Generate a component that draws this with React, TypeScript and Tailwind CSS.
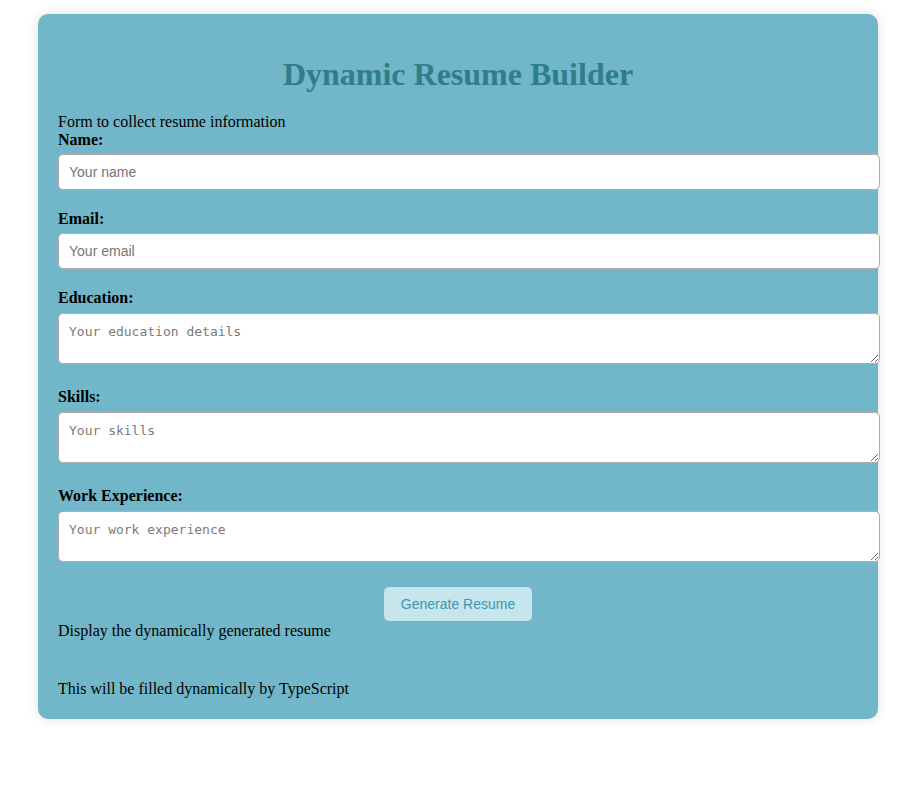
import React from 'react';

const serif = 'font-["Liberation_Serif","Times_New_Roman",serif]';

const Field = ({ label, placeholder, area, top }: { label: string, placeholder: string, area?: boolean, top: string }) => (
    <div className={top}>
        <label className={`block ${serif} text-[16px] leading-[18px] font-bold text-black`}>{label}</label>
        {area ? (
            <textarea
                placeholder={placeholder}
                className="block mt-[6px] w-[822px] h-[51px] px-[10px] py-[10px] bg-white border border-[#b8a9ac] rounded-[5px] font-['DejaVu_Sans_Mono',monospace] text-[13px] leading-[15px] placeholder:text-[#7a7a7a] resize-y"
            />
        ) : (
            <input
                placeholder={placeholder}
                className="block mt-[5px] w-[822px] h-[36px] px-[10px] bg-white border border-[#b8a9ac] rounded-[5px] font-['Liberation_Sans',Arial,sans-serif] text-[14px] placeholder:text-[#757575]"
            />
        )}
    </div>
);

export default function App() {
    return (
        <div className="min-h-[805px] bg-white pt-[14px]">
            <div className="ml-[38px] w-[840px] bg-[#71b7c9] rounded-[10px] shadow-[0_0_12px_rgba(0,0,0,0.12)] px-[20px] pt-[21px] pb-[21px]">
                <h1 className={`${serif} text-[32px] leading-[37px] font-bold text-[#2f7e8a] text-center mt-[21px] mb-[20px]`}>
                    Dynamic Resume Builder
                </h1>

                {/* Form */}
                <p className={`${serif} text-[16px] leading-[18px] text-black`}>Form to collect resume information</p>
                <Field label="Name:" placeholder="Your name" top="" />
                <Field label="Email:" placeholder="Your email" top="mt-[20px]" />
                <Field label="Education:" placeholder="Your education details" area top="mt-[20px]" />
                <Field label="Skills:" placeholder="Your skills" area top="mt-[24px]" />
                <Field label="Work Experience:" placeholder="Your work experience" area top="mt-[24px]" />

                <div className="flex justify-center mt-[25px]">
                    <button className="w-[148px] h-[34px] bg-[#c7e5ec] text-[#4196af] rounded-[5px] font-['Liberation_Sans',Arial,sans-serif] text-[14px]">
                        Generate Resume
                    </button>
                </div>

                {/* Output */}
                <p className={`${serif} text-[16px] leading-[18px] text-black mt-[1px]`}>Display the dynamically generated resume</p>
                <p className={`${serif} text-[16px] leading-[18px] text-black mt-[40px]`}>This will be filled dynamically by TypeScript</p>
            </div>
        </div>
    );
}
